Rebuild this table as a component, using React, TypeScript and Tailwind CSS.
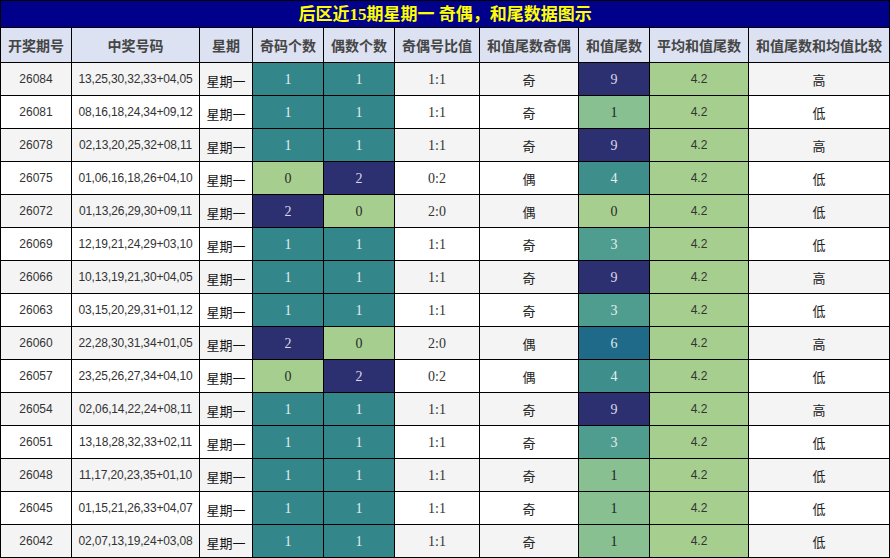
const rows: [string, string, number, number, string, string, number, string][] = [
  ['26084', '13,25,30,32,33+04,05', 1, 1, '1:1', '奇', 9, '高'],
  ['26081', '08,16,18,24,34+09,12', 1, 1, '1:1', '奇', 1, '低'],
  ['26078', '02,13,20,25,32+08,11', 1, 1, '1:1', '奇', 9, '高'],
  ['26075', '01,06,16,18,26+04,10', 0, 2, '0:2', '偶', 4, '低'],
  ['26072', '01,13,26,29,30+09,11', 2, 0, '2:0', '偶', 0, '低'],
  ['26069', '12,19,21,24,29+03,10', 1, 1, '1:1', '奇', 3, '低'],
  ['26066', '10,13,19,21,30+04,05', 1, 1, '1:1', '奇', 9, '高'],
  ['26063', '03,15,20,29,31+01,12', 1, 1, '1:1', '奇', 3, '低'],
  ['26060', '22,28,30,31,34+01,05', 2, 0, '2:0', '偶', 6, '高'],
  ['26057', '23,25,26,27,34+04,10', 0, 2, '0:2', '偶', 4, '低'],
  ['26054', '02,06,14,22,24+08,11', 1, 1, '1:1', '奇', 9, '高'],
  ['26051', '13,18,28,32,33+02,11', 1, 1, '1:1', '奇', 3, '低'],
  ['26048', '11,17,20,23,35+01,10', 1, 1, '1:1', '奇', 1, '低'],
  ['26045', '01,15,21,26,33+04,07', 1, 1, '1:1', '奇', 1, '低'],
  ['26042', '02,07,13,19,24+03,08', 1, 1, '1:1', '奇', 1, '低'],
];

const headers = ['开奖期号', '中奖号码', '星期', '奇码个数', '偶数个数', '奇偶号比值', '和值尾数奇偶', '和值尾数', '平均和值尾数', '和值尾数和均值比较'];
const widths = ['w-[71px]', 'w-[128px]', 'w-[53px]', 'w-[71px]', 'w-[71px]', 'w-[85px]', 'w-[99px]', 'w-[71px]', 'w-[99px]', 'w-[141px]'];

// count cells: 0 / 1 / 2
const countColor: Record<number, string> = {
  0: 'bg-[#a6cf8f] text-[#2a2a2a]',
  1: 'bg-[#33868a] text-[#e4eeee]',
  2: 'bg-[#2d3070] text-[#d8d8e8]',
};

// 和值尾数 cells
const tailColor: Record<number, string> = {
  0: 'bg-[#a6cf8f] text-[#2a2a2a]',
  1: 'bg-[#88c092] text-[#1e1e1e]',
  3: 'bg-[#4f9d8e] text-[#e4eeee]',
  4: 'bg-[#3e8e8c] text-[#e4eeee]',
  6: 'bg-[#1f6a88] text-[#dde8ee]',
  9: 'bg-[#2d3070] text-[#d8d8e8]',
};

const serif = "font-['Liberation_Serif','Noto_Sans_CJK_SC',serif]";
const sans = "font-['Liberation_Sans','Noto_Sans_CJK_SC',sans-serif]";
const cjk = "font-['Noto_Sans_CJK_SC',sans-serif]";

export default function App() {
  return (
    <div className="w-[890px] h-[558px] bg-white overflow-hidden">
      <table className="table-fixed border-collapse w-[890px]">
        <colgroup>
          {widths.map((w, i) => (
            <col key={i} className={w} />
          ))}
        </colgroup>
        <thead>
          <tr className="h-[27px]">
            <th
              colSpan={10}
              className={`border border-black bg-[#00008b] text-[#ffff00] text-[17px] font-bold leading-none p-0 ${serif}`}
            >
              后区近15期星期一 奇偶，和尾数据图示
            </th>
          </tr>
          <tr className="h-[35px]">
            {headers.map((h) => (
              <th
                key={h}
                className={`border border-black bg-[#dce2f2] text-[#454545] text-[14px] font-bold p-0 whitespace-nowrap ${cjk}`}
              >
                {h}
              </th>
            ))}
          </tr>
        </thead>
        <tbody>
          {rows.map((r, i) => (
            <tr key={r[0]} className={`h-[33px] ${i % 2 === 0 ? 'bg-[#f4f4f4]' : 'bg-white'}`}>
              <td className={`border border-black text-center text-[12px] text-[#333] p-0 ${sans}`}>{r[0]}</td>
              <td className={`border border-black text-center text-[12px] text-[#333] p-0 whitespace-nowrap tracking-[-0.15px] ${sans}`}>{r[1]}</td>
              <td className={`border border-black text-center text-[13px] text-[#111] p-0 pt-[3px] ${cjk}`}>星期一</td>
              <td className={`border border-black text-center text-[14px] p-0 ${serif} ${countColor[r[2]]}`}>{r[2]}</td>
              <td className={`border border-black text-center text-[14px] p-0 ${serif} ${countColor[r[3]]}`}>{r[3]}</td>
              <td className={`border border-black text-center text-[14px] text-[#333] p-0 ${serif}`}>{r[4]}</td>
              <td className={`border border-black text-center text-[13px] text-[#222] p-0 pt-[2px] ${cjk}`}>{r[5]}</td>
              <td className={`border border-black text-center text-[14px] p-0 ${serif} ${tailColor[r[6]]}`}>{r[6]}</td>
              <td className={`border border-black text-center text-[12px] text-[#333] p-0 bg-[#a6cf8f] ${sans}`}>4.2</td>
              <td className={`border border-black text-center text-[13px] text-[#222] p-0 pt-[2px] ${cjk}`}>{r[7]}</td>
            </tr>
          ))}
        </tbody>
      </table>
    </div>
  );
}
